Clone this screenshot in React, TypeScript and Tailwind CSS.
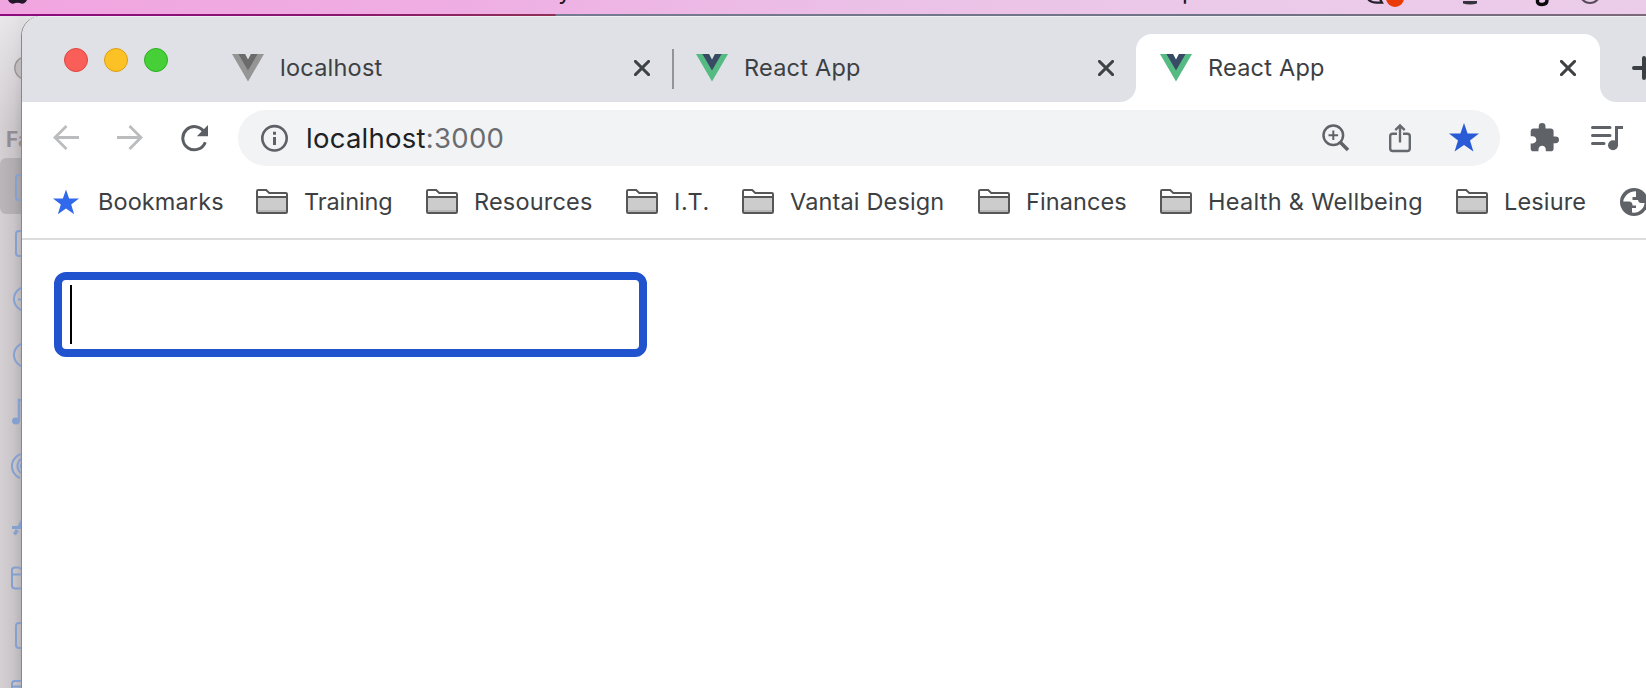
import type { ReactNode } from "react";

const folders = [
  { label: "Training", box: "w-[170px]", text: "tracking-[-0.1px]" },
  { label: "Resources", box: "w-[200px]", text: "tracking-[0.18px]" },
  { label: "I.T.", box: "w-[116px]", text: "tracking-[0.6px]" },
  { label: "Vantai Design", box: "w-[236px]", text: "tracking-[0.15px]" },
  { label: "Finances", box: "w-[182px]", text: "tracking-[0.1px]" },
  { label: "Health & Wellbeing", box: "w-[296px]", text: "tracking-[0.29px]" },
  { label: "Lesiure", box: "w-[164px]", text: "tracking-[0.15px]" },
];

function VueMark({ outer, inner }: { outer: string; inner: string }) {
  return (
    <svg className="shrink-0" width="32" height="28" viewBox="0 0 32 28">
      <path d="M0 0H13L16 5.8L19 0H32L16 27.6Z" fill={outer} />
      <path d="M6.4 0H13L16 5.8L19 0H25.6L16 16.6Z" fill={inner} />
    </svg>
  );
}

function CloseIcon() {
  return (
    <svg className="shrink-0" width="16" height="16" viewBox="0 0 16 16">
      <path d="M1.4 1.4L14.6 14.6M14.6 1.4L1.4 14.6" stroke="#3f4245" strokeWidth="2.9" strokeLinecap="round" />
    </svg>
  );
}

function Tab({ title, gray, active }: { title: string; gray?: boolean; active?: boolean }) {
  return (
    <div
      className={
        active
          ? "relative flex h-[68px] w-[464px] shrink-0 items-center rounded-t-2xl bg-white pl-6"
          : "relative flex h-[68px] w-[464px] shrink-0 items-center pl-6"
      }
    >
      <VueMark outer={gray ? "#959595" : "#55bb83"} inner={gray ? "#6b6b6b" : "#394b64"} />
      <span
        className={
          active
            ? "ml-4 w-[352px] whitespace-nowrap text-[23.5px] leading-7 tracking-[0.23px]"
            : "ml-4 w-[354px] whitespace-nowrap text-[23.5px] leading-7 tracking-[0.23px]"
        }
      >
        {title}
      </span>
      <CloseIcon />
      {active && (
        <svg className="absolute -left-4 bottom-0" width="16" height="16">
          <path d="M16 0V16H0A16 16 0 0 0 16 0Z" fill="#fff" />
        </svg>
      )}
      {active && (
        <svg className="absolute -right-4 bottom-0" width="16" height="16">
          <path d="M0 0V16H16A16 16 0 0 1 0 0Z" fill="#fff" />
        </svg>
      )}
    </div>
  );
}

function Folder() {
  return (
    <svg className="-mt-px shrink-0" width="32" height="25" viewBox="0 0 32 25">
      <path d="M1 8H31V23Q31 24 30 24H2Q1 24 1 23Z" fill="#cccccc" />
      <path d="M2 21H30V23H2Z" fill="#b5b5b5" />
      <path d="M1 8V2.2Q1 1 2.2 1H10.2L13.2 4H29.8Q31 4 31 5.2V22.8Q31 24 29.8 24H2.2Q1 24 1 22.8V8H31" fill="none" stroke="#575757" strokeWidth="2" />
    </svg>
  );
}

function SideRow({ children, selected }: { children?: ReactNode; selected?: boolean }) {
  return (
    <div className={selected ? "h-14 shrink-0 rounded-l-md bg-black/12" : "h-14 shrink-0"}>
      <svg width="22" height="56" viewBox="0 0 22 56" fill="none" stroke="#84a0ce" strokeWidth="2">
        {children}
      </svg>
    </div>
  );
}

function Sidebar() {
  return (
    <div className="flex w-[22px] shrink-0 flex-col overflow-hidden">
      <svg className="mt-10 shrink-0" width="22" height="24">
        <circle cx="26" cy="12" r="11.2" fill="#bfbbbd" stroke="#979395" strokeWidth="1.3" />
      </svg>
      <div className="mt-11 ml-[6px] h-[34px] shrink-0 text-[21px] leading-[32px] font-bold text-[#928c91]">Fa</div>
      <SideRow selected>
        <rect x="16" y="17" width="20" height="25" rx="3" />
      </SideRow>
      <SideRow>
        <rect x="16" y="17" width="20" height="25" rx="3" />
      </SideRow>
      <SideRow>
        <circle cx="26" cy="29" r="12" />
        <path d="M18 29.5H30" />
      </SideRow>
      <SideRow>
        <circle cx="26" cy="29" r="12" />
        <path d="M20.5 30.5H30" />
      </SideRow>
      <SideRow>
        <ellipse cx="16" cy="39" rx="4" ry="3.4" fill="#84a0ce" stroke="none" />
        <path d="M19 39V18H30" strokeWidth="2.4" />
      </SideRow>
      <SideRow>
        <path d="M20 40A12.7 12.7 0 0 1 24 15.5" />
        <path d="M21 35A8.8 8.8 0 0 1 24 19.5" />
        <path d="M22 31A5 5 0 0 1 24 23.5" />
      </SideRow>
      <SideRow>
        <path d="M12 33.5H22M19 33L26 20" strokeWidth="3.2" />
        <path d="M17.3 36L14.5 40.5" strokeWidth="3.4" />
      </SideRow>
      <SideRow>
        <path d="M22 38.5H15Q12 38.5 12 35.5V20Q12 17.5 15 17.5H18Q20 17.5 22 20M12 24.5H22" />
      </SideRow>
      <SideRow>
        <rect x="16" y="17" width="20" height="25" rx="3" />
      </SideRow>
      <SideRow>
        <path d="M22 40H12V22Q12 19 15 19H22M12 24.5H22" />
      </SideRow>
    </div>
  );
}

function MenuBar() {
  return (
    <div className="relative h-[14px] shrink-0 overflow-hidden bg-[linear-gradient(90deg,#f1a5e0_0%,#efaee3_28%,#ebc0e7_52%,#ebcae9_76%,#ebcce9_100%)] text-[24px] leading-6 text-[#1c1620]">
      <svg className="absolute inset-0" width="1646" height="14">
        <path d="M8 0H27Q25 3.8 22 3.8Q19.5 2.7 17.5 2.7Q15.5 2.7 13 3.8Q10 3.8 8 0Z" fill="#201828" />
        <path d="M1368 -1Q1371 3 1378 2.7H1382L1380 -1" fill="none" stroke="#241f28" strokeWidth="2.2" />
        <circle cx="1395" cy="-2" r="9" fill="#ea3a05" />
        <path d="M1463 1H1477V3.6Q1470 5.5 1463 3.6Z" fill="#35343c" />
        <path d="M1537.5 0V2Q1538 4.5 1542 4.5Q1547 4.5 1547 0" fill="none" stroke="#0b0a0d" strokeWidth="3.4" />
        <circle cx="1590" cy="-7" r="10" fill="none" stroke="#554a57" strokeWidth="2" />
      </svg>
      <span className="absolute top-[-21px] left-[558px]">y</span>
      <span className="absolute top-[-21px] left-[1182px]">p</span>
    </div>
  );
}

function Toolbar() {
  return (
    <div className="flex h-[72px] shrink-0 items-center pl-[31px]">
      <svg width="26" height="26" viewBox="0 0 26 26" fill="none" stroke="#bbbcbe" strokeWidth="2.8">
        <path d="M26 12.5H2M13.5 1L2 12.5L13.5 24" />
      </svg>
      <svg className="ml-[38px]" width="26" height="26" viewBox="0 0 26 26" fill="none" stroke="#bbbcbe" strokeWidth="2.8">
        <path d="M0 12.5H24M12.5 1L24 12.5L12.5 24" />
      </svg>
      <svg className="ml-[38px]" width="28" height="27" viewBox="0 0 28 27">
        <path d="M23.3 7.1A11.6 11.6 0 1 0 24.3 17.2" fill="none" stroke="#5b5f64" strokeWidth="3" />
        <path d="M27 0V11.3H15.8Z" fill="#5b5f64" />
      </svg>
      <div className="ml-[29px] flex h-14 w-[1262px] shrink-0 items-center rounded-full bg-[#f1f3f5] pl-[23px] text-[#5f6368]">
        <svg width="28" height="28" viewBox="0 0 28 28">
          <circle cx="13.5" cy="14.3" r="12.2" fill="none" stroke="#5f6068" strokeWidth="2.6" />
          <path d="M12 7.8H15V10.8H12ZM12 13H15V21H12Z" fill="#5f6068" />
        </svg>
        <span className="ml-4 w-[1017px] pl-px whitespace-nowrap text-[27.5px] leading-8 tracking-[0.26px]">
          <span className="text-[#202124]">localhost</span>
          <span className="text-[#6a6c6f]">:3000</span>
        </span>
        <svg width="28" height="28" viewBox="0 0 28 28" fill="none" stroke="#5f6368">
          <circle cx="11.3" cy="11.3" r="9.8" strokeWidth="2.5" />
          <path d="M6.5 11.3H16.1M11.3 6.5V16.1" strokeWidth="2" />
          <path d="M18 18L26 26" strokeWidth="3.6" />
        </svg>
        <svg className="ml-[39px]" width="22" height="30" viewBox="0 0 22 30" fill="none" stroke="#66696d" strokeWidth="2.4">
          <path d="M8 10.8H3.7Q1.2 10.8 1.2 13.3V25.5Q1.2 28 3.7 28H18.3Q20.8 28 20.8 25.5V13.3Q20.8 10.8 18.3 10.8H14M11 19.5V2.5M6.3 7.2L11 2.5L15.7 7.2" />
        </svg>
        <svg className="mb-px ml-[38px]" width="30" height="29" viewBox="0 0 30 29">
          <path d="M15 0L18.6 10.6H30L21 17.5L24.4 28.5L15 22L5.6 28.5L9 17.5L0 10.6H11.4Z" fill="#295bd6" />
        </svg>
      </div>
      <svg className="mb-0.5 ml-[30px] shrink-0" width="29" height="29" viewBox="1.5 1 21.5 21.5" fill="#5f6368">
        <path d="M20.5 11H19V7c0-1.1-.9-2-2-2h-4V3.5a2.5 2.5 0 0 0-5 0V5H4c-1.1 0-1.99.9-1.99 2v3.8H3.5c1.49 0 2.7 1.21 2.7 2.7s-1.21 2.7-2.7 2.7H2V20c0 1.1.9 2 2 2h3.8v-1.5c0-1.49 1.21-2.7 2.7-2.7s2.7 1.21 2.7 2.7V22H17c1.1 0 2-.9 2-2v-4h1.5a2.5 2.5 0 0 0 0-5z" />
      </svg>
      <svg className="ml-8 shrink-0" width="32" height="26" viewBox="0 0 32 26">
        <path d="M1.5 2.5H19M1.5 10.5H19M1.5 18.5H13" stroke="#5f6368" strokeWidth="3" strokeLinecap="round" />
        <path d="M32 2.5H25.5V20" fill="none" stroke="#5f6368" strokeWidth="3" />
        <circle cx="22" cy="20.3" r="5" fill="#5f6368" />
      </svg>
    </div>
  );
}

export default function App() {
  return (
    <div className="flex h-[688px] w-[1646px] flex-col overflow-hidden bg-white font-['Inter','Liberation_Sans',sans-serif] text-[#3c4043]">
      <MenuBar />
      <div className="h-0.5 shrink-0 bg-[linear-gradient(90deg,#8c0a7e_0%,#8a1670_20%,#8f3055_33.7%,#777b91_33.8%,#6e7385_75%,#7b6878_100%)]" />
      <div className="flex min-h-0 grow bg-[linear-gradient(180deg,rgba(240,239,242,0.75)_0px,rgba(230,228,231,0)_110px),linear-gradient(90deg,#d5d0d4_0px,#c9c4c8_14px,#b6b1b5_22px,#d9d7da_50px)]">
        <Sidebar />
        <div className="flex min-w-0 grow flex-col overflow-hidden rounded-tl-[20px] bg-white shadow-[-1px_0_0_0_#8b878a]">
          <div className="flex h-[86px] shrink-0 items-end bg-[#dfe1e6] shadow-[inset_0_1px_0_0_#eef0f2]">
            <div className="flex h-[86px] w-[186px] shrink-0 gap-4 pt-8 pl-[42px]">
              <div className="size-6 rounded-full border border-[#df453f] bg-[#f95e58]" />
              <div className="size-6 rounded-full border border-[#dc9f17] bg-[#fcc124]" />
              <div className="size-6 rounded-full border border-[#2eae24] bg-[#47cf37]" />
            </div>
            <div className="relative flex">
              <Tab title="localhost" gray />
              <div className="absolute top-[15px] left-[464px] h-10 w-0.5 bg-[#929499]" />
            </div>
            <Tab title="React App" />
            <Tab title="React App" active />
            <svg className="mb-[22px] ml-8 shrink-0" width="24" height="24">
              <path d="M2 12H22M12 2V22" stroke="#3c4043" strokeWidth="4" strokeLinecap="round" />
            </svg>
          </div>
          <Toolbar />
          <div className="flex h-[66px] shrink-0 items-start border-b-2 border-[#dcdcdc] pt-[14px] pl-[31px] text-[23.5px] leading-7">
            <div className="flex w-[203px] shrink-0 items-center">
              <svg width="26" height="26" viewBox="0 0 30 29">
                <path d="M15 0L18.6 10.6H30L21 17.5L24.4 28.5L15 22L5.6 28.5L9 17.5L0 10.6H11.4Z" fill="#3069ec" />
              </svg>
              <span className="ml-[19px] tracking-[0.1px]">Bookmarks</span>
            </div>
            {folders.map((f) => (
              <div key={f.label} className={`flex shrink-0 items-center gap-4 whitespace-nowrap ${f.box}`}>
                <Folder />
                <span className={f.text}>{f.label}</span>
              </div>
            ))}
            <svg className="shrink-0" width="28" height="28" viewBox="0 0 28 28">
              <circle cx="14" cy="14" r="14" fill="#5f6368" />
              <path d="M16 3.2C9 3.2 4 8 3.2 13.6H9.5Q12.5 14 12.5 17.5H16V20H12V24.5Q15 25 18 24Q24 21 24.6 15H21Q18.5 15 18 12H12.5V9H16Z" fill="#fff" />
            </svg>
          </div>
          <div className="grow pt-8 pl-8">
            <div className="flex h-[85px] w-[593px] items-center rounded-[12px] border-8 border-[#2253cf] bg-white pl-2">
              <div className="h-[59px] w-0.5 bg-black" />
            </div>
          </div>
        </div>
      </div>
    </div>
  );
}
